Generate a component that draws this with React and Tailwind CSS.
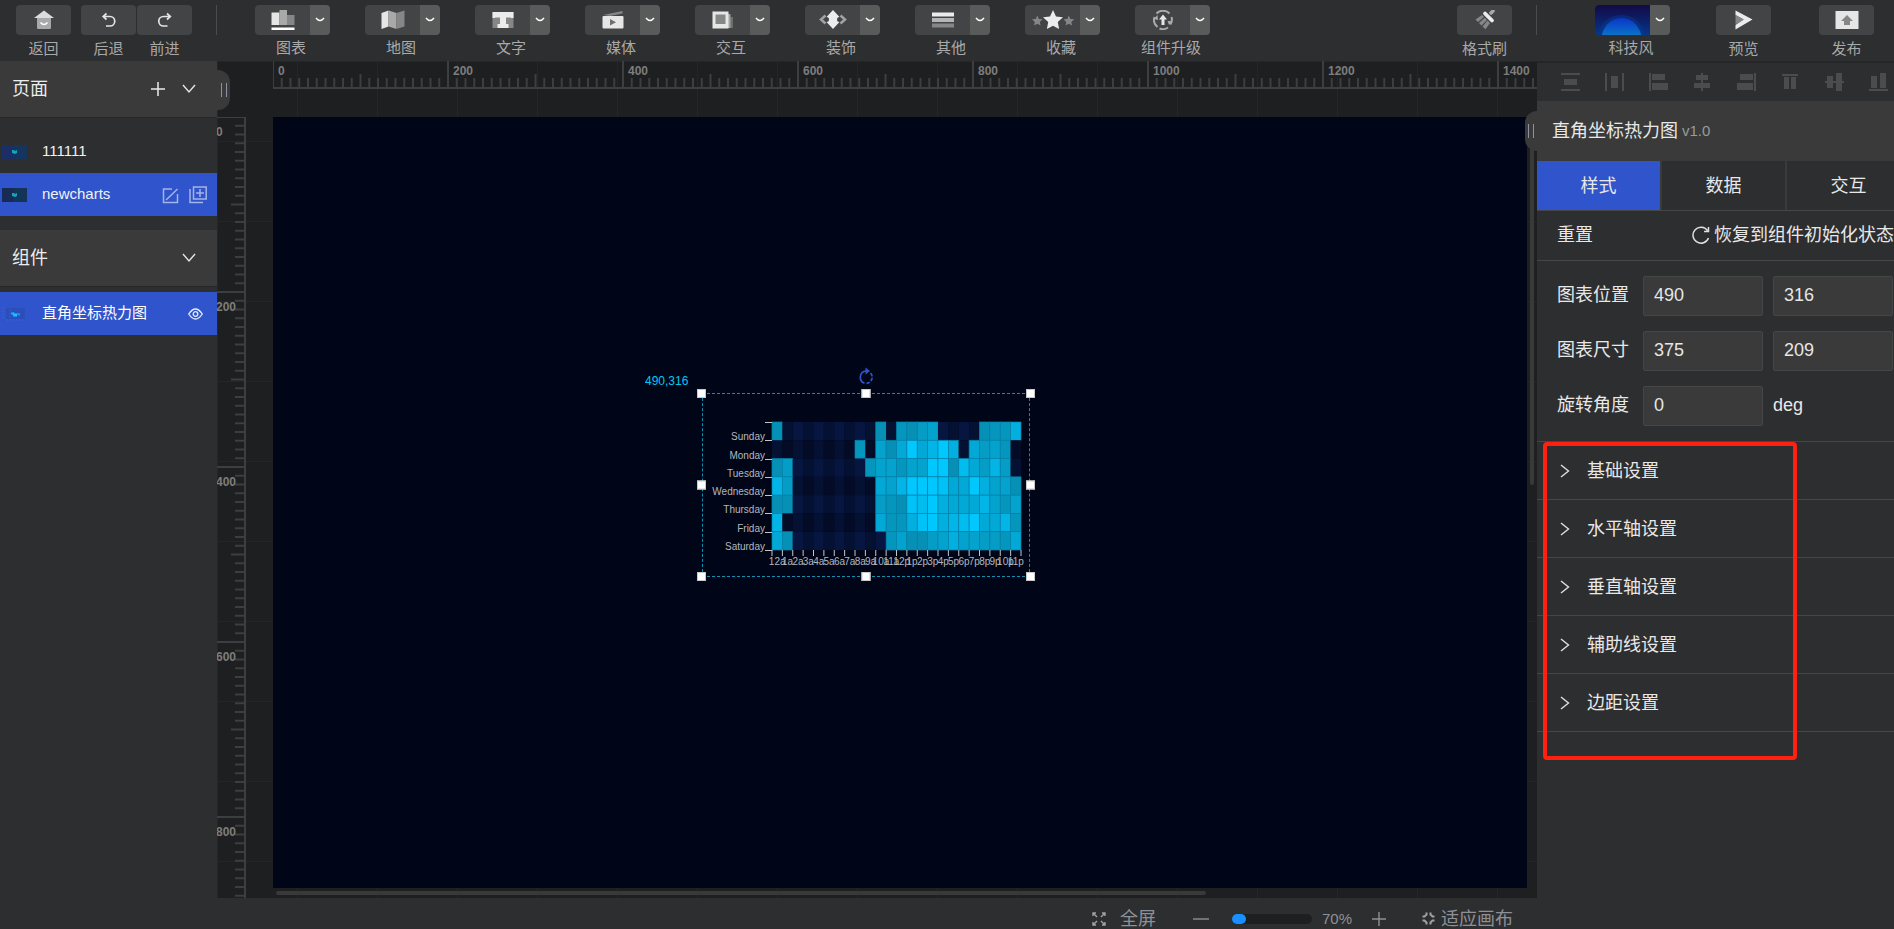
import React, { useState } from "react";

const days = ["Sunday", "Monday", "Tuesday", "Wednesday", "Thursday", "Friday", "Saturday"];

const hours = [
  "12a", "1a", "2a", "3a", "4a", "5a", "6a", "7a", "8a", "9a", "10a", "11a",
  "12p", "1p", "2p", "3p", "4p", "5p", "6p", "7p", "8p", "9p", "10p", "11p",
];

const heat = [
  [1, 0, 0, 0, 0, 0, 0, 0, 0, 0, 1, 0, 2, 1, 3, 4, 0, 0, 0, 0, 1, 2, 2, 6],
  [0, 0, 0, 0, 0, 0, 0, 0, 2, 0, 4, 1, 5, 10, 5, 7, 11, 6, 0, 5, 3, 4, 2, 0],
  [1, 3, 0, 0, 0, 0, 0, 0, 0, 2, 4, 4, 2, 4, 4, 14, 12, 1, 8, 5, 3, 7, 3, 0],
  [7, 3, 0, 0, 0, 0, 0, 0, 0, 0, 5, 4, 7, 14, 13, 12, 9, 5, 5, 10, 6, 4, 4, 1],
  [1, 1, 0, 0, 0, 0, 0, 0, 0, 0, 3, 2, 1, 9, 8, 10, 6, 5, 5, 5, 7, 4, 2, 4],
  [7, 0, 0, 0, 0, 0, 0, 0, 0, 0, 5, 2, 2, 6, 9, 11, 6, 7, 8, 12, 5, 5, 7, 2],
  [5, 1, 0, 0, 0, 0, 0, 0, 0, 0, 0, 2, 4, 1, 1, 3, 4, 6, 4, 4, 3, 3, 2, 5],
];

const cellColor = (value, row, col) => {
  if (value === 0) {
    const shade = (row % 2) + (col % 2);
    return ["#061640", "#051132", "#030b26"][shade];
  }
  const t = (Math.min(value, 10) - 1) / 9;
  const g = Math.round(144 + t * 56);
  const b = Math.round(181 + t * 74);
  return `rgb(${Math.round(6 - t * 6)}, ${g}, ${b})`;
};

const HomeIcon = () => (
  <svg width="20" height="20" viewBox="0 0 20 20">
    <path d="M3 7h14v11a1 1 0 0 1-1 1H4a1 1 0 0 1-1-1z" fill="#a9a9a9" />
    <path d="M10 0.5 20 8H0z" fill="#dcdcdc" />
    <path d="M6.500 12.500q3.500 4 7 0" fill="none" stroke="#fff" strokeWidth="1.600" />
  </svg>
);

const UndoIcon = () => (
  <svg width="16" height="16" viewBox="0 0 16 16" fill="none" stroke="#e4e4e4" strokeWidth="1.700">
    <path d="M3 4.500h6a4.700 4.700 0 0 1 0 9.500H5" />
    <path d="M5.500 1.500 2.200 4.500l3.300 3" />
  </svg>
);

const RedoIcon = () => (
  <svg width="16" height="16" viewBox="0 0 16 16" fill="none" stroke="#e4e4e4" strokeWidth="1.700">
    <path d="M12.500 4.500H6.500a4.700 4.700 0 0 0 0 9.500h4" />
    <path d="m10 1.500 3.300 3-3.300 3" />
  </svg>
);

const ChartIcon = () => (
  <svg width="24" height="20" viewBox="0 0 24 20">
    <rect x="0.500" y="2.500" width="8" height="12.500" fill="#e6e6e6" />
    <rect x="8.500" y="0" width="7.500" height="15" fill="#a9a9a9" />
    <rect x="16" y="5" width="7.500" height="10" fill="#868686" />
    <rect x="0.500" y="17.500" width="23" height="2.500" fill="#fff" />
  </svg>
);

const MapIcon = () => (
  <svg width="24" height="20" viewBox="0 0 24 20">
    <path d="M0.500 3 7.500 0.500v16L0.500 19z" fill="#e6e6e6" />
    <path d="m7.500 0.500 8 2.500v16l-8-2.500z" fill="#a9a9a9" />
    <path d="m15.500 3 8-2.500v16l-8 2.500z" fill="#868686" />
  </svg>
);

const TextIcon = () => (
  <svg width="22" height="18" viewBox="0 0 22 18">
    <rect x="0.500" y="1" width="21" height="16" fill="#868686" />
    <path d="M0.500 1h21v6h-2.500V6.500h-5V13h2.500v4h-11v-4H8V6.500H3V7H0.500z" fill="#ececec" />
  </svg>
);

const MediaIcon = () => (
  <svg width="22" height="18" viewBox="0 0 22 18">
    <path d="m1 4 19.500-4v2.500L8 5z" fill="#868686" />
    <rect x="0.500" y="5" width="21" height="12.500" rx="1" fill="#e6e6e6" />
    <path d="M8 8v6.500l6-3.200z" fill="#6f6f6f" />
  </svg>
);

const InteractIcon = () => (
  <svg width="22" height="18" viewBox="0 0 22 18">
    <rect x="8" y="6" width="13" height="11" fill="#6d6d6d" />
    <rect x="5" y="3" width="13.500" height="14" fill="#a2a2a2" />
    <rect x="0.500" y="0.500" width="16" height="17" fill="#e6e6e6" />
    <rect x="3.500" y="3.500" width="10" height="9.500" fill="#868686" />
  </svg>
);

const DecorIcon = () => (
  <svg width="28" height="20" viewBox="0 0 28 20">
    <path d="M6.500 5.500 2 9.500l4.500 4M21.500 5.500l4.500 4-4.500 4" fill="none" stroke="#a2a2a2" strokeWidth="2.500" />
    <path d="m14 0 6.500 7a2.500 2.500 0 0 0 0 5L14 19l-6.500-7a2.500 2.500 0 0 0 0-5z" fill="#ececec" />
  </svg>
);

const OtherIcon = () => (
  <svg width="22" height="16" viewBox="0 0 22 16">
    <rect x="0" y="0.500" width="22" height="4" fill="#ececec" />
    <rect x="0" y="6" width="22" height="4" fill="#b5b5b5" />
    <rect x="0" y="11.500" width="22" height="4" fill="#868686" />
  </svg>
);

const star = "m10 0 3 6.400 7 .9-5.200 4.800 1.300 7L10 15.700l-6.100 3.400 1.300-7L0 7.300l7-.9z";

const StarsIcon = () => (
  <svg width="42" height="20" viewBox="0 0 42 20">
    <g transform="translate(0 5.500) scale(.53)"><path d={star} fill="#868686" /></g>
    <g transform="translate(31.500 5.500) scale(.53)"><path d={star} fill="#868686" /></g>
    <g transform="translate(11 0)"><path d={star} fill="#ececec" /></g>
  </svg>
);

const UpgradeIcon = () => (
  <svg width="20" height="20" viewBox="0 0 20 20">
    <path d="M4.500 17A9 9 0 0 1 1.500 7M3.500 3.500A9 9 0 0 1 16.500 3.500M18.500 7a9 9 0 0 1-1 7.500M15 17.500a9 9 0 0 1-8.500 1" fill="none" stroke="#a9a9a9" strokeWidth="2" />
    <path d="M0.500 9 4.500 5l.5 5zM14.500 11h5l-3.500 4z" fill="#a9a9a9" />
    <path d="m10 4.500 4 5h-2.500V15h-3V9.500H6z" fill="#e6e6e6" />
  </svg>
);

const BrushIcon = () => (
  <svg width="20" height="20" viewBox="0 0 20 20">
    <path d="m16 3 2-2" stroke="#a9a9a9" strokeWidth="3.500" strokeLinecap="round" />
    <path d="m10 3.500 7 7" stroke="#ececec" strokeWidth="3.800" strokeLinecap="round" />
    <path d="M7 5 0.500 9.500 3 12l6-5zM9.800 7.800 4 13l2.500 2.500 5.500-5.500zM12.500 10.600 7.500 16.500l3 2.800 4.500-6.300z" fill="#868686" />
  </svg>
);

const PreviewIcon = () => (
  <svg width="18" height="20" viewBox="0 0 18 20">
    <path d="M0.500 0.500 17.500 9.500 0.500 19.500l0-4.500 8-5.500-8-4.500z" fill="#ececec" />
    <path d="M0.500 5 9 9.500 0.500 14.500z" fill="#868686" />
  </svg>
);

const PublishIcon = () => (
  <svg width="24" height="18" viewBox="0 0 24 18">
    <rect x="0.500" width="23" height="18" fill="#e6e6e6" />
    <path d="m12 4 6 6h-3v4H9v-4H6z" fill="#868686" />
  </svg>
);

const SmallArrow = () => (
  <svg width="10" height="6" viewBox="0 0 10 6" fill="none" stroke="#fff" strokeWidth="1.500">
    <path d="M1 1q4 5 8 0" />
  </svg>
);

const ChevronDown = () => (
  <svg width="14" height="10" viewBox="0 0 14 10" fill="none" stroke="#e6e6e6" strokeWidth="1.400">
    <path d="m1 1 6 7 6-7" />
  </svg>
);

const ThemeImage = () => (
  <svg width="55" height="30" viewBox="0 0 55 30">
    <defs>
      <linearGradient id="sky" x1="0" y1="0" x2="0" y2="1">
        <stop offset="0" stopColor="#130a45" />
        <stop offset="1" stopColor="#05358a" />
      </linearGradient>
      <linearGradient id="globe" x1="0" y1="0" x2="0" y2="1">
        <stop offset="0" stopColor="#0a35cc" />
        <stop offset=".45" stopColor="#0a78c4" />
      </linearGradient>
      <clipPath id="globeClip"><rect width="55" height="30" /></clipPath>
    </defs>
    <rect width="55" height="30" fill="url(#sky)" />
    <g clipPath="url(#globeClip)">
      <circle cx="26.500" cy="34" r="24" fill="#063a8c" opacity=".5" />
      <ellipse cx="26.500" cy="34" rx="20" ry="21" fill="url(#globe)" />
    </g>
  </svg>
);

const menus = [
  { label: "图表", Icon: ChartIcon },
  { label: "地图", Icon: MapIcon },
  { label: "文字", Icon: TextIcon },
  { label: "媒体", Icon: MediaIcon },
  { label: "交互", Icon: InteractIcon },
  { label: "装饰", Icon: DecorIcon },
  { label: "其他", Icon: OtherIcon },
  { label: "收藏", Icon: StarsIcon },
  { label: "组件升级", Icon: UpgradeIcon },
];

const alignIcons = [
  { name: "垂直分布", d: "M0 0h19v2H0zM3 6h13v6H3zM0 16h19v2H0z" },
  { name: "水平分布", d: "M0 0h2v18H0zM6 3h7v12H6zM17 0h2v18h-2z" },
  { name: "左对齐", d: "M0 0h2v18H0zM3 1h13v6H3zM3 10h16v7H3z" },
  { name: "水平居中", d: "M8 0h2v18H8zM3 2h12v5H3zM1 10h16v5H1z" },
  { name: "右对齐", d: "M17 0h2v18h-2zM3 1h13v6H3zM0 10h16v7H0z" },
  { name: "顶对齐", d: "M1 1h16v2H1zM3 4h5v12H3zM10 4h5v12h-5z" },
  { name: "垂直居中", d: "M0 8h19v2H0zM2 3h6v12H2zM11 0h6v18h-6z" },
  { name: "底对齐", d: "M0 16h19v2H0zM2 3h6v12H2zM11 0h6v15h-6z" },
];

const ToolButton = ({ label, children }) => (
  <div className="flex w-[55px] flex-col items-center">
    <button type="button" aria-label={label} className="flex h-[30px] w-full items-center justify-center rounded-sm bg-[#434445]">
      {children}
    </button>
    <span className="mt-1 whitespace-nowrap text-[15px] leading-5 text-[#a8a9a9]">{label}</span>
  </div>
);

const MenuButton = ({ label, children }) => (
  <div className="flex w-[75px] flex-col">
    <div className="flex h-[30px] overflow-hidden rounded-sm">
      <button type="button" aria-label={label} className="flex w-[55px] items-center justify-center bg-[#434445]">
        {children}
      </button>
      <button type="button" aria-label={`${label}菜单`} className="flex w-5 items-center justify-center bg-[#595b5a]">
        <SmallArrow />
      </button>
    </div>
    <span className="mt-[3px] w-[72px] whitespace-nowrap text-center text-[15px] leading-5 text-[#a8a9a9]">
      {label}
    </span>
  </div>
);

const Header = () => (
  <header className="flex h-[61px] shrink-0 items-start bg-[#2d2e30] pl-4 pr-5 pt-[5px]">
    <ToolButton label="返回"><HomeIcon /></ToolButton>
    <div className="ml-2.5 flex gap-px">
      <ToolButton label="后退"><UndoIcon /></ToolButton>
      <ToolButton label="前进"><RedoIcon /></ToolButton>
    </div>
    <div className="ml-6 mr-[38px] h-[30px] w-px bg-[#4b4c4d]" />
    <div className="flex gap-[35px]">
      {menus.map(({ label, Icon }) => (
        <MenuButton key={label} label={label}><Icon /></MenuButton>
      ))}
    </div>
    <div className="ml-auto flex">
      <ToolButton label="格式刷"><BrushIcon /></ToolButton>
      <div className="ml-6 h-[30px] w-px bg-[#4b4c4d]" />
      <div className="ml-[58px]">
        <MenuButton label="科技风"><ThemeImage /></MenuButton>
      </div>
      <div className="ml-[46px] flex gap-12">
        <ToolButton label="预览"><PreviewIcon /></ToolButton>
        <ToolButton label="发布"><PublishIcon /></ToolButton>
      </div>
    </div>
  </header>
);

const Thumb = ({ dark }) => (
  <svg width="25" height="14" viewBox="0 0 25 14">
    <rect width="25" height="14" fill={dark ? "#182b55" : "#1b2e66"} />
    <rect x="12" width="13" height="14" fill="#123a58" opacity=".6" />
    <path d="M10 5h2l1 1 2-1v3l-2 1-3-1z" fill="#12a5b8" />
  </svg>
);

const ChartThumb = () => (
  <svg width="25" height="14" viewBox="0 0 25 14">
    <rect x="4" y="1" width="19" height="11" fill="#2b4fb8" />
    <path d="M1 1v12M5 13h18M8 3v8" stroke="#4568d8" strokeDasharray="1 2" />
    <path d="M9 5h3l1 1h5v3l-3-1v2h-4V8H9z" fill="#1f86f5" />
    <path d="M10 6h2v1h3v2h-3z" fill="#16c8ff" />
  </svg>
);

const Sidebar = ({ page, setPage }) => (
  <div className="relative w-[217px] shrink-0 bg-[#2d2e30]">
    <div className="flex h-[57px] items-center border-b border-[#262728] bg-[#393a39] pl-3 pr-[21px]">
      <h2 className="text-lg text-[#ececec]">页面</h2>
      <button type="button" aria-label="新增页面" className="ml-auto">
        <svg width="14" height="16" viewBox="0 0 14 16" stroke="#ececec" strokeWidth="1.500">
          <path d="M0 8h14M7 1v14" />
        </svg>
      </button>
      <button type="button" aria-label="收起页面" className="ml-[17px]"><ChevronDown /></button>
    </div>
    <ul className="mt-3 text-[15px] text-[#f2f2f2]">
      {["111111", "newcharts"].map((name) => (
        <li
          key={name}
          onClick={() => setPage(name)}
          className={`flex h-[43px] cursor-pointer items-center pl-0.5 pr-2.5 ${
            page === name ? "bg-[#2f54cb]" : ""
          }`}
        >
          <Thumb dark={name === "newcharts"} />
          <span className="ml-[15px]">{name}</span>
          {page === name && (
            <span className="ml-auto flex gap-2.5">
              <button type="button" aria-label="编辑">
                <svg width="17" height="18" viewBox="0 0 17 18" fill="none" stroke="#a5b4e8" strokeWidth="1.500">
                  <path d="M10 3H1.500v13.500h14V8M4 14 15.500 3" />
                </svg>
              </button>
              <button type="button" aria-label="复制">
                <svg width="18" height="18" viewBox="0 0 18 18" fill="none" stroke="#a5b4e8" strokeWidth="1.500">
                  <path d="M4.500 1h12.700v12H4.500zM1 3v13.500h13M7 7h8M11 3v8" />
                </svg>
              </button>
            </span>
          )}
        </li>
      ))}
    </ul>
    <div className="mt-3.5 flex h-[57px] items-center border-b border-[#262728] bg-[#393a39] pl-3 pr-[21px]">
      <h2 className="text-lg text-[#ececec]">组件</h2>
      <button type="button" aria-label="收起组件" className="ml-auto"><ChevronDown /></button>
    </div>
    <div className="mt-[5px] flex h-[43px] items-center bg-[#2f54cb] pl-0.5 pr-3.5 text-[15px] text-white">
      <ChartThumb />
      <span className="ml-[15px]">直角坐标热力图</span>
      <button type="button" aria-label="显示" className="ml-auto">
        <svg width="15" height="12" viewBox="0 0 15 12" fill="none" stroke="#e6ebff" strokeWidth="1.300">
          <path d="M.7 6Q7.500-4 14.300 6 7.500 16 .7 6z" />
          <circle cx="7.500" cy="6" r="2.300" />
        </svg>
      </button>
    </div>
    <button
      type="button"
      aria-label="收起左栏"
      className="absolute left-full top-[9px] z-10 flex h-10 w-[13px] items-center justify-center gap-1 rounded-r-xl bg-[#393a39]"
    >
      <span className="h-3.5 w-px bg-[#8a93a3]" />
      <span className="h-3.5 w-px bg-[#8a93a3]" />
    </button>
  </div>
);

// 200 canvas units take 175px at 70% zoom, 20 ticks each
const ticks = [...Array(160)].map((_, i) => i);

const tickLength = (i) => {
  if (i % 20 === 0) return 28;
  return i % 10 === 0 ? 14 : 10;
};

const TopRuler = () => (
  <svg className="h-7 w-full" stroke="#3d3e40" strokeWidth="2">
    <path d="M0 27h3000" />
    {ticks.map((i) => (
      <path key={i} d={`M${i * 8.75} 27v${-tickLength(i)}`} />
    ))}
    {[0, 200, 400, 600, 800, 1000, 1200, 1400].map((n) => (
      <text key={n} x={n * 0.875 + 5} y="14" fontSize="12" fontWeight="bold" fill="#7d7d7d" stroke="none">
        {n}
      </text>
    ))}
  </svg>
);

const LeftRuler = () => (
  <svg className="h-full w-7.5" stroke="#3d3e40" strokeWidth="2">
    <path d="M28 0v3000" />
    {ticks.map((i) => (
      <path key={i} d={`M28 ${i * 8.75}h${-tickLength(i)}`} />
    ))}
    {[0, 200, 400, 600, 800].map((n) => (
      <text key={n} x="-1" y={n * 0.875 + 19} fontSize="12" fontWeight="bold" fill="#7d7d7d" stroke="none">
        {n}
      </text>
    ))}
  </svg>
);

const cw = 249 / 24;
const ch = 128 / 7;

const HeatMap = () => (
  <svg width="328" height="183" viewBox="0 0 328 183" className="block">
    {heat.map((row, r) =>
      row.map((v, c) => (
        <rect
          key={`${r}-${c}`}
          x={70 + c * cw}
          y={29 + r * ch}
          width={cw}
          height={ch}
          fill={cellColor(v, r, c)}
          stroke={v ? "#0484ad" : "none"}
          strokeWidth="0.700"
        />
      ))
    )}
    <g stroke="#c4c6ca" strokeWidth="1">
      {[...Array(8)].map((_, i) => (
        <path key={i} d={`M63 ${Math.round(29 + i * ch) + 0.5}h7`} />
      ))}
      {[...Array(25)].map((_, i) => (
        <path key={i} d={`M${70 + i * cw} 157v6`} />
      ))}
    </g>
    <g fill="#b4b7be" fontSize="10">
      {days.map((d, i) => (
        <text key={d} x="63" y={Math.round(29 + (i + 1) * ch)} textAnchor="end">{d}</text>
      ))}
      {hours.map((h, i) => (
        <text key={h} x={70 + (i + 0.5) * cw} y="172" textAnchor="middle">{h}</text>
      ))}
    </g>
  </svg>
);

const handles = [
  "-left-[5px] -top-1",
  "left-1/2 -translate-x-1/2 -top-1",
  "-right-[5px] -top-1",
  "-left-[5px] top-1/2 -translate-y-1/2",
  "-right-[5px] top-1/2 -translate-y-1/2",
  "-left-[5px] -bottom-1",
  "left-1/2 -translate-x-1/2 -bottom-1",
  "-right-[5px] -bottom-1",
];

const Canvas = () => (
  <main className="relative flex min-w-0 flex-1 flex-col overflow-hidden bg-[#1e1f21] bg-[linear-gradient(to_right,#252628_1px,transparent_1px),linear-gradient(to_bottom,#252628_1px,transparent_1px)] bg-[size:80px_80px]">
    <div className="h-14 shrink-0 pl-14"><TopRuler /></div>
    <div className="flex min-h-0 flex-1">
      <div className="w-14 shrink-0 overflow-hidden"><LeftRuler /></div>
      <div className="relative mb-2.5 flex-1 bg-[#000617]">
        <div className="absolute left-[429px] top-[276px] h-[184px] w-[328px]">
          <span className="absolute -left-[57px] -top-5 text-xs text-[#00c8f0]">490,316</span>
          <svg width="16" height="18" viewBox="0 0 16 18" fill="none" className="absolute -top-[26px] left-1/2 -translate-x-1/2" stroke="#2f54cb" strokeWidth="1.700">
            <path d="M8 4A6.300 6.300 0 0 0 6.500 16.200" />
            <path d="M8.500 16.400A6.300 6.300 0 0 0 11.500 5" strokeDasharray="3.500 1.500" />
            <path d="M7.500 0.500v7L12 4z" fill="#2f54cb" stroke="none" />
          </svg>
          <HeatMap />
          <div className="absolute inset-0 border border-dashed border-[#0e8fb0]" />
          {handles.map((pos) => (
            <span key={pos} className={`absolute size-[9px] border border-[#c8c8c8] bg-white ${pos}`} />
          ))}
        </div>
      </div>
      <div className="w-2.5 shrink-0 pl-[3px]">
        <div className="h-[368px] w-1 rounded-full bg-[#39393a]" />
      </div>
    </div>
    <div className="absolute bottom-[3px] left-[59px] right-[331px] h-1 rounded-full bg-[#39393a]" />
  </main>
);

const tabs = ["样式", "数据", "交互"];
const sections = ["基础设置", "水平轴设置", "垂直轴设置", "辅助线设置", "边距设置"];
const inputClass =
  "h-10 w-[120px] rounded-xs border border-[#454646] bg-[#393a39] px-2.5 pb-0.5 text-lg text-[#e6e6e6] outline-none";

const RightPanel = () => {
  const [tab, setTab] = useState("样式");

  return (
    <aside className="relative w-[357px] shrink-0 bg-[#2d2e30] text-lg text-[#e8e8e8]">
      <button
        type="button"
        aria-label="收起右栏"
        className="absolute right-full top-[50px] z-10 flex h-10 w-3 items-center justify-center gap-1 rounded-l-xl bg-[#393a39]"
      >
        <span className="h-3.5 w-px bg-[#8a93a3]" />
        <span className="h-3.5 w-px bg-[#8a93a3]" />
      </button>
      <div className="h-full overflow-hidden">
        <div className="w-[375px]">
          <div className="flex h-10 items-center border-t-2 border-[#252628] pl-[11px]">
            {alignIcons.map(({ name, d }) => (
              <button key={name} type="button" aria-label={name} className="flex w-11 justify-center">
                <svg width="19" height="18" viewBox="0 0 19 18"><path d={d} fill="#4b4c4c" /></svg>
              </button>
            ))}
          </div>
          <div className="flex h-[60px] items-center gap-1 bg-[#393a39] pl-[15px]">
            <h2>直角坐标热力图</h2>
            <span className="text-[15px] text-[#9a9a9a]">v1.0</span>
          </div>
          <div className="flex h-[50px] border-b border-[#454647]">
            {tabs.map((t) => (
              <button
                key={t}
                type="button"
                onClick={() => setTab(t)}
                className={`w-[125px] border-r-2 border-[#393a39] ${tab === t ? "bg-[#2f54cb]" : ""}`}
              >
                {t}
              </button>
            ))}
          </div>
          <div className="flex h-[50px] items-center border-b border-[#454647] pb-0.5 pl-5 pr-[18px]">
            <span>重置</span>
            <button type="button" className="ml-auto flex items-center gap-1">
              <svg width="18" height="18" viewBox="0 0 18 18" fill="none" stroke="#e0e0e0" strokeWidth="1.500">
                <path d="M15.500 4.500A8 8 0 1 0 16.500 12M16.500 1v4.500H12" />
              </svg>
              恢复到组件初始化状态
            </button>
          </div>
          <div className="flex flex-col gap-[15px] py-[15px] pl-5">
            <div className="flex items-center">
              <label htmlFor="pos-x" className="w-[86px] pb-0.5">图表位置</label>
              <input id="pos-x" className={inputClass} defaultValue="490" />
              <input aria-label="图表位置 Y" className={`${inputClass} ml-2.5`} defaultValue="316" />
            </div>
            <div className="flex items-center">
              <label htmlFor="size-w" className="w-[86px] pb-0.5">图表尺寸</label>
              <input id="size-w" className={inputClass} defaultValue="375" />
              <input aria-label="图表高度" className={`${inputClass} ml-2.5`} defaultValue="209" />
            </div>
            <div className="flex items-center">
              <label htmlFor="angle" className="w-[86px] pb-0.5">旋转角度</label>
              <input id="angle" className={inputClass} defaultValue="0" />
              <span className="ml-2.5 pb-0.5">deg</span>
            </div>
          </div>
          <div className="relative border-t border-[#454647]">
            {sections.map((s) => (
              <button
                key={s}
                type="button"
                className="flex h-[58px] w-full items-center gap-[17px] border-b border-[#454647] pl-[23px] text-left"
              >
                <svg width="10" height="14" viewBox="0 0 10 14" fill="none" stroke="#e0e0e0" strokeWidth="1.400">
                  <path d="m1 1 7.500 6L1 13" />
                </svg>
                {s}
              </button>
            ))}
            <div className="pointer-events-none absolute left-1.5 top-0 h-[318px] w-[254px] rounded border-4 border-[#ff2010]" />
          </div>
        </div>
      </div>
    </aside>
  );
};

const Footer = () => (
  <footer className="flex h-[31px] shrink-0 items-center justify-end bg-[#2d2e30] pr-[381px] pt-2.5 text-lg leading-5 text-[#8f9096]">
    <button type="button" className="flex items-center gap-3.5">
      <svg width="14" height="14" viewBox="0 0 14 14" fill="none" stroke="#a0a1a4" strokeWidth="1.400">
        <path d="M1 4V1h3M1 1l4 4M10 1h3v3M13 1 9 5M1 10v3h3M1 13l4-4M13 10v3h-3M13 13 9 9" />
      </svg>
      全屏
    </button>
    <button type="button" aria-label="缩小" className="ml-[37px]">
      <svg width="16" height="14" viewBox="0 0 16 14" stroke="#8f9096" strokeWidth="1.400"><path d="M0 7h16" /></svg>
    </button>
    <input
      type="range"
      aria-label="缩放"
      min="70"
      max="200"
      defaultValue="70"
      className="ml-[23px] h-2.5 w-20 appearance-none rounded-full bg-[#1e1f20] [&::-webkit-slider-thumb]:h-2.5 [&::-webkit-slider-thumb]:w-3.5 [&::-webkit-slider-thumb]:appearance-none [&::-webkit-slider-thumb]:rounded-full [&::-webkit-slider-thumb]:bg-[#1890ff]"
    />
    <span className="ml-2.5 text-[15px] leading-5">70%</span>
    <button type="button" aria-label="放大" className="ml-5">
      <svg width="14" height="14" viewBox="0 0 14 14" stroke="#8f9096" strokeWidth="1.400"><path d="M0 7h14M7 0v14" /></svg>
    </button>
    <button type="button" className="ml-9 flex items-center gap-1.5">
      <svg width="13" height="13" viewBox="0 0 13 13" fill="none" stroke="#a0a1a4" strokeWidth="2">
        <path d="M4.500 0.500v2l-2 2h-2M8.500 0.500v2l2 2h2M4.500 12.500v-2l-2-2h-2M8.500 12.500v-2l2-2h2" />
      </svg>
      适应画布
    </button>
  </footer>
);

const App = () => {
  const [page, setPage] = useState("newcharts");

  return (
    <div className="flex h-screen flex-col overflow-hidden bg-[#2d2e30] font-['Liberation_Sans','Noto_Sans_CJK_SC',sans-serif]">
      <Header />
      <div className="flex min-h-0 flex-1">
        <Sidebar page={page} setPage={setPage} />
        <Canvas />
        <RightPanel />
      </div>
      <Footer />
    </div>
  );
};

export default App;
